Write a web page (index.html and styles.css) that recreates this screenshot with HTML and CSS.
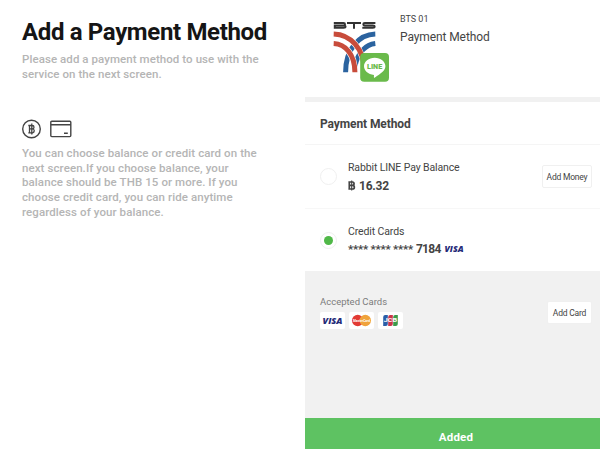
FILE: index.html
```html
<!DOCTYPE html>
<html lang="en">
<head>
    <meta charset="UTF-8">
    <meta name="viewport" content="width=device-width, initial-scale=1.0">
    <title>Add a Payment Method</title>
    <link rel="stylesheet" href="styles.css">
</head>
<body>

    <section class="intro">
        <h1>Add a Payment Method</h1>
        <p class="intro-text">Please add a payment method to use with the<br>service on the next screen.</p>

        <div class="intro-icons">
            <svg width="20" height="20" viewBox="0 0 20 20" fill="none" stroke="#444" stroke-width="1.4">
                <circle cx="9.5" cy="10" r="8.8"/>
                <path d="M6.3 6.5h4a1.700 1.700 0 0 1 0 3.400H7.200h3.500a2 2 0 0 1 0 3.900H6.300M7.500 6.500v7.300M9.800 4.600v11" stroke-width="1.300"/>
            </svg>
            <svg width="22" height="18" viewBox="0 0 22 18" fill="none" stroke="#444" stroke-width="1.4">
                <rect x="0.8" y="1.2" width="20" height="15.400" rx="1"/>
                <path d="M1 4.800h20M14 13.200h3.800"/>
            </svg>
        </div>

        <p class="choice-text">You can choose balance or credit card on the<br>next screen.If you choose balance, your<br>balance should be THB 15 or more. If you<br>choose credit card, you can ride anytime<br>regardless of your balance.</p>
    </section>

    <main class="panel">
        <header class="service">
            <svg class="service-logo" width="60" height="64" viewBox="0 0 60 64">
                <!-- BTS wordmark -->
                <g fill="none" stroke="#333" stroke-width="2">
                    <path d="M.8 3h9.700q1.500 0 1.500 1.200t-1.500 1.200q2 0 2 1.200T10.500 7.800H1.800V5.400h8.700"/>
                    <path d="M14 3h14M21 3v5.800M42.400 3H31.800q-1.500 0-1.500 1.200t1.500 1.200h8q1.800 0 1.800 1.200T39.800 7.800H29.300"/>
                </g>
                <!-- crossing tracks -->
                <g fill="none" stroke-width="5">
                    <path d="M42.300 14C26 14.500 12.600 29 12.600 52.300M42.300 23.500C33 24.500 25 32 22 46" stroke="#2b639f"/>
                    <path d="M.7 23.500C12 24 21.900 34 21.900 52.300M.7 14C17 14.500 31.500 28 31.500 52.300" stroke="#fff" stroke-width="6.200"/>
                    <path d="M.7 23.500C12 24 21.900 34 21.900 52.300M.7 14C17 14.500 31.500 28 31.500 52.300" stroke="#c84c3b"/>
                </g>
                <!-- LINE badge -->
                <rect x="27.200" y="33" width="28.800" height="28.800" rx="4" fill="#6aba4b"/>
                <path d="M41.700 37.700c6 0 10.700 3.800 10.700 8.400 0 4.800-4.700 7.500-10.500 11.500-.9.600-1.200-.1-.9-2.700C35 54.600 31 50.700 31 46.100c0-4.600 4.700-8.400 10.700-8.400z" fill="#fff"/>
                <text class="line-text" x="34" y="48.800" textLength="15.200" lengthAdjust="spacingAndGlyphs">LINE</text>
            </svg>
            <div class="service-info">
                <p class="service-code">BTS 01</p>
                <p class="service-name">Payment Method</p>
            </div>
        </header>

        <h2>Payment Method</h2>

        <div class="method balance">
            <span class="radio"></span>
            <div class="method-info">
                <p class="method-name">Rabbit LINE Pay Balance</p>
                <p class="method-value">
                    <svg width="8" height="11" viewBox="0 0 8 11" fill="none" stroke="#444" stroke-width="1.7">
                        <path d="M.4 2h4a1.600 1.600 0 0 1 0 3.300H1.300h3.200a1.800 1.800 0 0 1 0 3.700H.4M1.300 2v7"/>
                        <path d="M3.700 .5v10" stroke-width="1.100"/>
                    </svg>
                    <span class="amount">16.32</span>
                </p>
            </div>
            <button class="small-button">Add Money</button>
        </div>

        <div class="method credit">
            <span class="radio selected"></span>
            <div class="method-info">
                <p class="method-name">Credit Cards</p>
                <p class="method-value"><span class="stars">**** **** ****</span><span class="digits">7184</span>
                    <svg class="visa" width="22" height="12" viewBox="0 0 22 12">
                        <text class="visa-text" x="0.500" y="9" textLength="19" lengthAdjust="spacingAndGlyphs">VISA</text>
                    </svg>
                </p>
            </div>
        </div>

        <div class="accepted">
            <div>
                <p class="accepted-title">Accepted Cards</p>
                <div class="card-list">
                    <svg class="card" width="25" height="17" viewBox="0 0 25 17">
                        <text class="visa-text" x="2.500" y="11.500" textLength="20" lengthAdjust="spacingAndGlyphs">VISA</text>
                    </svg>
                    <svg class="card" width="25" height="17" viewBox="0 0 25 17">
                        <circle cx="8.700" cy="8.500" r="5.700" fill="#e23a34"/>
                        <circle cx="16.300" cy="8.500" r="5.700" fill="#f0a33c"/>
                        <text class="master-text" x="4" y="9.800" textLength="17" lengthAdjust="spacingAndGlyphs">MasterCard</text>
                    </svg>
                    <svg class="card" width="25" height="17" viewBox="0 0 25 17">
                        <path d="M7.200 3H9.800v9q0 2-2 2H5.200V5q0-2 2-2z" fill="#2a5ea8"/>
                        <path d="M12.200 3h2.600v9q0 2-2 2h-2.600V5q0-2 2-2z" fill="#cb3348"/>
                        <path d="M17.200 3h2.600v9q0 2-2 2h-2.600V5q0-2 2-2z" fill="#3c9a4a"/>
                        <text class="jcb-text" x="5.800" y="10.200" textLength="13.400" lengthAdjust="spacingAndGlyphs">JCB</text>
                    </svg>
                </div>
            </div>
            <button class="small-button add-card">Add Card</button>
        </div>

        <button class="added-button">Added</button>
    </main>

</body>
</html>
```

FILE: styles.css
```css
/* Basic reset */
* {
    margin: 0;
    padding: 0;
    box-sizing: border-box;
}

body {
    display: grid;
    grid-template-columns: 305px 295px;
    height: 449px;
    overflow: hidden;
    font-family: Roboto, "Liberation Sans", sans-serif;
    background-color: #fff;
    color: #444;
}

svg {
    display: block;
    flex-shrink: 0;
}

/* Left side */
.intro {
    padding: 18px 0 0 22px;
    white-space: nowrap;
}

h1 {
    font-size: 24px;
    line-height: 28px;
    font-weight: 700;
    letter-spacing: -0.35px;
    color: #151515;
}

.intro-text,
.choice-text {
    font-size: 11.5px;
    line-height: 14.6px;
    font-weight: 500;
    letter-spacing: 0.07px;
    color: #b5b5b5;
}

.intro-text {
    margin-top: 6px;
}

.intro-icons {
    display: flex;
    align-items: center;
    gap: 8px;
    margin-top: 38px;
}

.choice-text {
    margin-top: 7px;
    letter-spacing: 0.09px;
}

/* Right side */
.panel {
    display: flex;
    flex-direction: column;
    white-space: nowrap;
}

.service {
    display: flex;
    height: 102px;
    padding: 20px 0 0 28px;
    border-bottom: 5px solid #f1f1f1;
}

.service-info {
    margin: -7px 0 0 7px;
}

.service-code {
    font-size: 9px;
    line-height: 12px;
}

.service-name {
    margin-top: 4px;
    font-size: 12px;
    line-height: 16px;
    letter-spacing: -0.1px;
}

.line-text {
    font-size: 7px;
    font-weight: 900;
    fill: #6aba4b;
}

h2 {
    height: 43px;
    padding: 1px 0 0 15px;
    border-bottom: 1px solid #f5f5f5;
    font-size: 12px;
    line-height: 43px;
    font-weight: 700;
    letter-spacing: -0.1px;
}

/* Payment method rows */
.method {
    display: flex;
    align-items: center;
    padding: 0 8px 0 15px;
}

.balance {
    height: 64px;
    border-bottom: 1px solid #f7f7f7;
}

.credit {
    height: 62px;
}

.radio {
    display: flex;
    align-items: center;
    justify-content: center;
    width: 17px;
    height: 17px;
    border: 1px solid #f0f0f0;
    border-radius: 50%;
}

.selected::after {
    content: "";
    width: 9px;
    height: 9px;
    border-radius: 50%;
    background-color: #50b848;
}

.method-info {
    flex: 1;
    margin-left: 11px;
}

.method-name {
    font-size: 10.5px;
    line-height: 14px;
    letter-spacing: -0.12px;
}

.method-value {
    display: flex;
    align-items: center;
    margin-top: 4px;
    font-size: 12px;
    line-height: 14px;
    font-weight: 700;
    letter-spacing: -0.25px;
}

.credit .method-value {
    margin-top: 3px;
}

.amount {
    margin-left: 3px;
}

.stars {
    font-size: 11.5px;
}

.digits {
    margin-left: 3px;
    letter-spacing: -0.7px;
}

.visa {
    margin-left: 3px;
}

.visa-text {
    font-family: "Open Sans", sans-serif;
    font-size: 9px;
    font-style: italic;
    font-weight: 800;
    letter-spacing: 0;
    fill: #242a78;
}

.small-button {
    width: 50px;
    height: 23px;
    border: 1px solid #f0f0f0;
    border-radius: 2px;
    background-color: #fff;
    font-family: inherit;
    font-size: 8.5px;
    letter-spacing: -0.2px;
    color: #444;
}

/* Accepted cards */
.accepted {
    display: flex;
    justify-content: space-between;
    flex: 1;
    padding: 24px 8px 0 15px;
    background-color: #f1f1f1;
}

.accepted-title {
    font-size: 9.5px;
    line-height: 13px;
    color: #7c7c7c;
}

.card-list {
    display: flex;
    gap: 4px;
    margin-top: 4px;
}

.card {
    border-radius: 2px;
    background-color: #fff;
}

.master-text {
    font-size: 3.5px;
    font-weight: 700;
    fill: #fff;
}

.jcb-text {
    font-size: 5px;
    font-weight: 700;
    fill: #fff;
}

.add-card {
    width: 45px;
    margin-top: 6px;
}

.added-button {
    height: 31px;
    padding: 6px 0 0 7px;
    border: none;
    background-color: #5ec262;
    font-family: inherit;
    font-size: 11.5px;
    font-weight: 700;
    letter-spacing: 0.2px;
    color: #fff;
}
```
